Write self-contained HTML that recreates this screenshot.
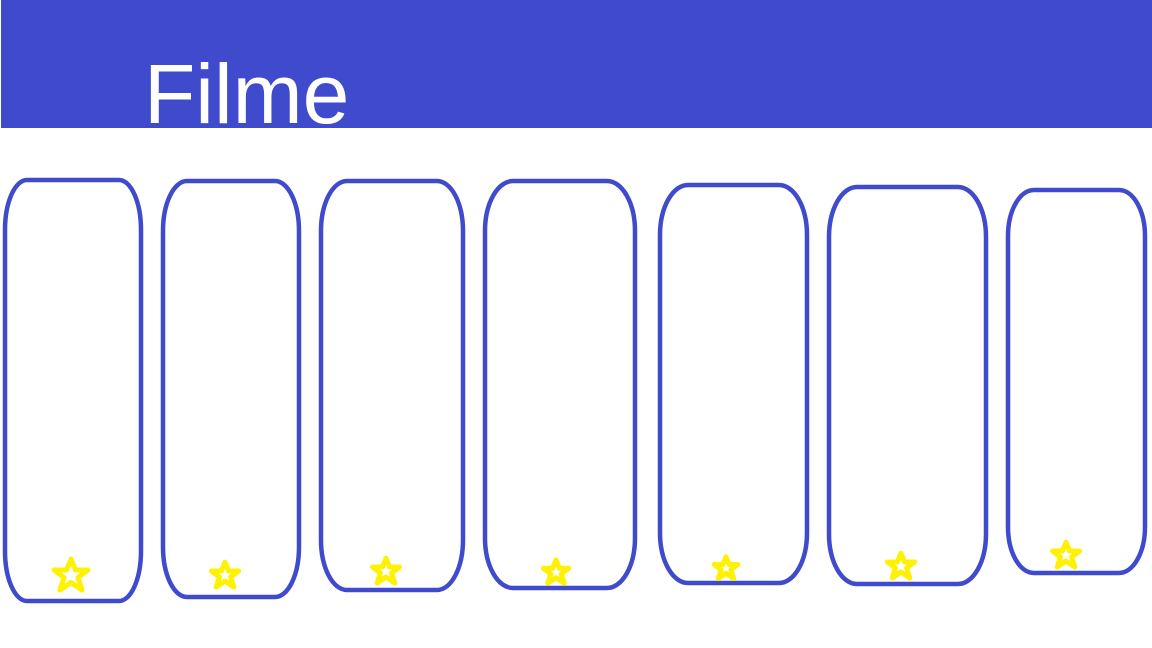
<!DOCTYPE html>
<html><head><style>
html,body{margin:0;padding:0;width:1152px;height:648px;overflow:hidden;background:#fff}
.hdr{position:absolute;left:1px;top:0;width:1151px;height:128px;background:#3f4acc}
.t{position:absolute;left:144px;top:44px;font-family:"Liberation Sans",sans-serif;font-size:84px;color:#fff;line-height:100px;letter-spacing:0px}
svg{position:absolute;left:0;top:0}
</style></head><body>
<div class="hdr"></div>
<div class="t">Filme</div>
<svg width="1152" height="648" viewBox="0 0 1152 648">
<g fill="none" stroke="#3f4acc" stroke-width="4.5">
<rect x="5" y="180" width="136" height="421" rx="22" ry="50"/>
<rect x="163" y="181" width="136" height="416" rx="24" ry="50"/>
<rect x="321" y="181" width="142" height="409" rx="26" ry="50"/>
<rect x="485" y="181" width="150" height="407" rx="28" ry="50"/>
<rect x="660" y="185" width="147" height="398" rx="28" ry="50"/>
<rect x="829" y="187" width="157" height="397" rx="28" ry="50"/>
<rect x="1008" y="190" width="137" height="383" rx="26" ry="46"/>
</g>
<g fill="none" stroke="#fff200" stroke-width="5" stroke-linejoin="round">
<path vector-effect="non-scaling-stroke" d="M0,-16 L4.5,-5 L17,-5 L7,2.5 L11,15 L0,7.5 L-11,15 L-7,2.5 L-17,-5 L-4.5,-5 Z" transform="translate(71,575)"/>
<path vector-effect="non-scaling-stroke" d="M0,-16 L4.5,-5 L17,-5 L7,2.5 L11,15 L0,7.5 L-11,15 L-7,2.5 L-17,-5 L-4.5,-5 Z" transform="translate(225,575) scale(0.8)"/>
<path vector-effect="non-scaling-stroke" d="M0,-16 L4.5,-5 L17,-5 L7,2.5 L11,15 L0,7.5 L-11,15 L-7,2.5 L-17,-5 L-4.5,-5 Z" transform="translate(386,571) scale(0.8)"/>
<path vector-effect="non-scaling-stroke" d="M0,-16 L4.5,-5 L17,-5 L7,2.5 L11,15 L0,7.5 L-11,15 L-7,2.5 L-17,-5 L-4.5,-5 Z" transform="translate(556,572) scale(0.75)"/>
<path vector-effect="non-scaling-stroke" d="M0,-16 L4.5,-5 L17,-5 L7,2.5 L11,15 L0,7.5 L-11,15 L-7,2.5 L-17,-5 L-4.5,-5 Z" transform="translate(726,568) scale(0.7)"/>
<path vector-effect="non-scaling-stroke" d="M0,-16 L4.5,-5 L17,-5 L7,2.5 L11,15 L0,7.5 L-11,15 L-7,2.5 L-17,-5 L-4.5,-5 Z" transform="translate(901,566) scale(0.8)"/>
<path vector-effect="non-scaling-stroke" d="M0,-16 L4.5,-5 L17,-5 L7,2.5 L11,15 L0,7.5 L-11,15 L-7,2.5 L-17,-5 L-4.5,-5 Z" transform="translate(1066,555) scale(0.8)"/>
</g>
</svg>
</body></html>
